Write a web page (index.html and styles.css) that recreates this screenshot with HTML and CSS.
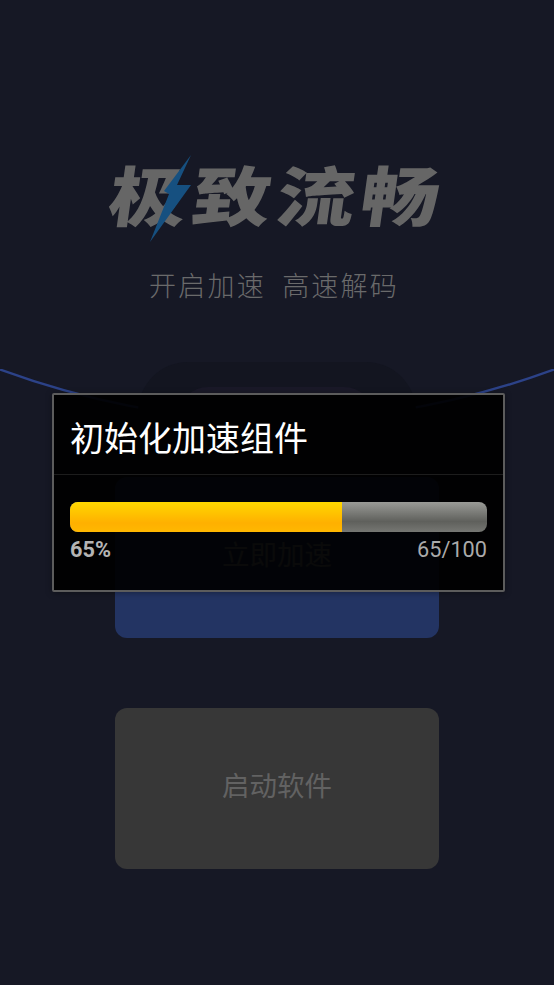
FILE: index.html
```html
<!DOCTYPE html>
<html lang="zh-CN">
<head>
<meta charset="utf-8">
<title>极致流畅</title>
<link rel="stylesheet" href="styles.css">
</head>
<body>
<main class="screen">
  <svg class="arc" viewBox="0 0 554 120" aria-hidden="true"><path d="M0 0.5Q277 102 554 0.5"/></svg>
  <header class="hero">
    <div class="logo">
      <h1 class="logo-text">极致流畅</h1>
      <svg class="bolt" viewBox="0 0 42 88" aria-hidden="true"><path d="M41 0L27 30H41L0 87L19 39L14 36Z"/></svg>
    </div>
    <p class="tagline">开启加速&nbsp;&nbsp;高速解码</p>
  </header>
  <div class="halo halo-outer"></div>
  <div class="halo halo-inner"></div>
  <div class="actions">
    <button class="action action-blue">立即加速</button>
    <button class="action action-grey">启动软件</button>
  </div>
  <section class="dialog">
    <h2 class="dialog-title">初始化加速组件</h2>
    <div class="dialog-body">
      <div class="track"><div class="fill" style="width:65.2%"></div></div>
      <div class="labels"><span class="percent">65%</span><span class="count">65/100</span></div>
    </div>
  </section>
</main>
</body>
</html>
```
FILE: styles.css
```css
* { box-sizing: border-box; }
html, body { margin: 0; height: 100%; }
body { background: #161825; font-family: "Roboto", "Noto Sans CJK SC", sans-serif; overflow: hidden; }
.screen { position: relative; width: 554px; height: 985px; overflow: hidden; background: #161825; }
.arc { position: absolute; left: 0; top: 369px; width: 554px; height: 120px; }
.arc path { fill: none; stroke: #2c4288; stroke-width: 2.4; }
.hero { display: flex; flex-direction: column; align-items: center; padding-top: 155px; }
.logo { position: relative; width: 340px; height: 85px; padding: 0 0 9px 2px; display: flex; justify-content: center; align-items: center; }
.logo-text { margin: 0; font: 900 65px/76px "Noto Sans CJK SC", sans-serif; letter-spacing: 5px; color: #666; transform: skewX(-8deg) scaleX(1.2); white-space: nowrap; }
.bolt { position: absolute; left: 43px; top: 0; width: 42px; height: 88px; }
.bolt path { fill: #165080; }
.tagline { margin: 27px 0 0; padding-right: 6px; font: 300 27px/36px "Noto Sans CJK SC", serif; letter-spacing: 2.2px; color: #6a6a6b; white-space: nowrap; }
.halo { position: absolute; }
.halo-outer { left: 138px; top: 362px; width: 278px; height: 120px; border-radius: 50px 50px 0 0; background: #131520; }
.halo-inner { left: 178px; top: 387px; width: 196px; height: 100px; border-radius: 30px 30px 0 0; background: #1a1928; }
.actions { position: absolute; left: 115px; top: 477px; width: 324px; display: flex; flex-direction: column; gap: 70px; }
.action { height: 161px; border: 0; border-radius: 12px; font: 400 27.5px/1 "Noto Sans CJK SC", sans-serif; padding: 0 0 8px; }
.action-blue { background: #233463; color: #8a8a8a; }
.action-grey { background: #373737; color: #626262; }
.dialog { position: absolute; left: 52px; top: 393px; width: 453px; height: 199px; background: rgba(0,0,0,.93); border: 2px solid #5c5c5c; border-radius: 2px; box-shadow: 0 1px 6px rgba(0,0,0,.35); }
.dialog-title { margin: 0; height: 80px; padding: 0 16px; border-bottom: 1px solid #1d1d1d; font: 400 34px/84px "Noto Sans CJK SC", sans-serif; color: #fff; white-space: nowrap; }
.dialog-body { padding: 27px 16px 0; }
.track { height: 30px; border-radius: 8px; overflow: hidden; background: linear-gradient(#9a9b97, #5f605c 65%, #767773); }
.fill { height: 100%; background: linear-gradient(#ffd800, #ffb000 70%, #ffb800); }
.labels { display: flex; justify-content: space-between; margin-top: 6px; font-size: 21.7px; line-height: 24px; color: #b4b4b4; }
.percent { font-weight: 700; }
.count { font-weight: 400; color: #aaa; }
```
